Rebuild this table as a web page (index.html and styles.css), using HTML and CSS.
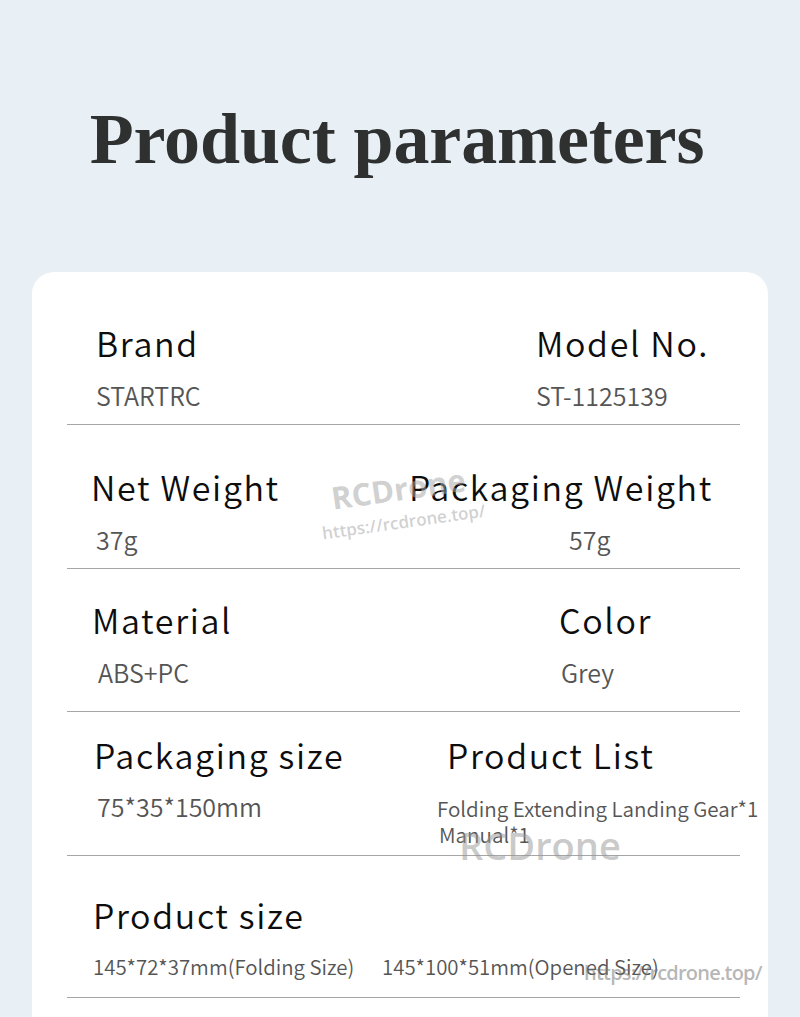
FILE: index.html
```html
<!DOCTYPE html>
<html lang="en">
<head>
<meta charset="utf-8">
<title>Product parameters</title>
<link rel="stylesheet" href="styles.css">
</head>
<body>
<header class="hero">
  <h1 class="title">Product parameters</h1>
</header>
<main class="card">
  <div class="row r1">
    <div class="cell">
      <div class="label">Brand</div>
      <div class="value in-2">STARTRC</div>
    </div>
    <div class="cell">
      <div class="label">Model No.</div>
      <div class="value in-2">ST-1125139</div>
    </div>
  </div>
  <div class="row r2">
    <div class="cell">
      <div class="label">Net Weight</div>
      <div class="value in-7">37g</div>
    </div>
    <div class="cell">
      <div class="label">Packaging Weight</div>
      <div class="value in-162">57g</div>
    </div>
  </div>
  <div class="row r3">
    <div class="cell">
      <div class="label">Material</div>
      <div class="value in-8">ABS+PC</div>
    </div>
    <div class="cell">
      <div class="label">Color</div>
      <div class="value in-4">Grey</div>
    </div>
  </div>
  <div class="row r4">
    <div class="cell">
      <div class="label">Packaging size</div>
      <div class="value in-5">75*35*150mm</div>
    </div>
    <div class="cell">
      <div class="label">Product List</div>
      <div class="list">
        <div class="list-item out-10">Folding Extending Landing Gear*1</div>
        <div class="list-item out-7">Manual*1</div>
      </div>
    </div>
  </div>
  <div class="row r5">
    <div class="cell">
      <div class="label">Product size</div>
      <div class="sizes">
        <span class="size">145*72*37mm(Folding Size)</span>
        <span class="size">145*100*51mm(Opened Size)</span>
      </div>
    </div>
  </div>

  <div class="wm wm-tilt">
    <div class="wm-brand">RCDrone</div>
    <div class="wm-url">https://rcdrone.top/</div>
  </div>
  <div class="wm wm-big">RCDrone</div>
  <div class="wm wm-link">https://rcdrone.top/</div>
</main>
</body>
</html>
```
FILE: styles.css
```css
html, body {
  margin: 0;
  padding: 0;
}
body {
  width: 800px;
  height: 1017px;
  overflow: hidden;
  background: #e8f0f6;
  font-family: "Noto Sans CJK SC", "Noto Sans", sans-serif;
}
.hero {
  padding-top: 99px;
  height: 272px;
  box-sizing: border-box;
}
.title {
  margin: 0;
  font-family: "Liberation Serif", "Times New Roman", serif;
  font-weight: bold;
  font-size: 72px;
  line-height: 80px;
  color: #2f3131;
  text-align: center;
  letter-spacing: -0.1px;
  padding-right: 6px;
}
.card {
  position: relative;
  margin: 0 32px;
  background: #fff;
  border-radius: 22px;
  padding: 0 28px 0 35px;
  height: 780px;
}
.row {
  display: grid;
  border-bottom: 1px solid #a6a6a6;
  padding-left: 22px;
  align-items: start;
}
.r1 { grid-template-columns: 440px 1fr; padding-top: 51px; padding-bottom: 14px; padding-left: 27px; }
.r2 { grid-template-columns: 318px 1fr; padding-top: 42px; padding-bottom: 14px; padding-left: 22px; }
.r3 { grid-template-columns: 467px 1fr; padding-top: 31px; padding-bottom: 24px; padding-left: 23px; }
.r4 { grid-template-columns: 353px 1fr; padding-top: 23px; padding-bottom: 8px; padding-left: 25px; }
.r5 { grid-template-columns: 1fr; padding-top: 39px; padding-bottom: 18px; padding-left: 24px; }
.label {
  padding-left: 2px;
  font-size: 34px;
  font-weight: 350;
  line-height: 40px;
  color: #0d0d0d;
  letter-spacing: 1.65px;
  white-space: nowrap;
}
.value {
  margin-top: 17px;
  font-size: 25px;
  font-weight: 350;
  line-height: 30px;
  color: #555;
  white-space: nowrap;
}
.r4 .value { margin-top: 16px; }
.in-2 { padding-left: 2px; }
.in-4 { padding-left: 4px; }
.in-5 { padding-left: 5px; }
.in-7 { padding-left: 7px; }
.in-8 { padding-left: 8px; }
.in-162 { padding-left: 162px; }
.list {
  margin-top: 20px;
}
.list-item {
  font-size: 20.6px;
  font-weight: 350;
  line-height: 26px;
  color: #555;
  white-space: nowrap;
}
.out-10 { margin-left: -8px; }
.out-7 { margin-left: -6px; }
.sizes {
  margin-top: 18px;
  padding-left: 2px;
  display: grid;
  grid-template-columns: 289px auto;
}
.size {
  font-size: 20.4px;
  font-weight: 350;
  line-height: 26px;
  color: #555;
  white-space: nowrap;
}
.wm {
  position: absolute;
  font-family: "Open Sans", "Liberation Sans", sans-serif;
  font-weight: 600;
  pointer-events: none;
  white-space: nowrap;
}
.wm-tilt {
  left: 283px;
  top: 210px;
  transform: rotate(-8deg);
  transform-origin: left top;
  color: rgba(170, 170, 170, 0.55);
}
.wm-brand {
  font-size: 31px;
  line-height: 36px;
  padding-left: 14px;
  font-weight: 700;
}
.wm-url {
  margin-top: 6px;
  font-size: 17px;
  line-height: 20px;
}
.wm-big {
  left: 427px;
  top: 550px;
  font-size: 38px;
  line-height: 46px;
  color: rgba(150, 150, 150, 0.5);
}
.wm-link {
  left: 552px;
  top: 688px;
  font-size: 20px;
  line-height: 26px;
  color: rgba(120, 120, 120, 0.55);
  letter-spacing: -0.8px;
}
```
